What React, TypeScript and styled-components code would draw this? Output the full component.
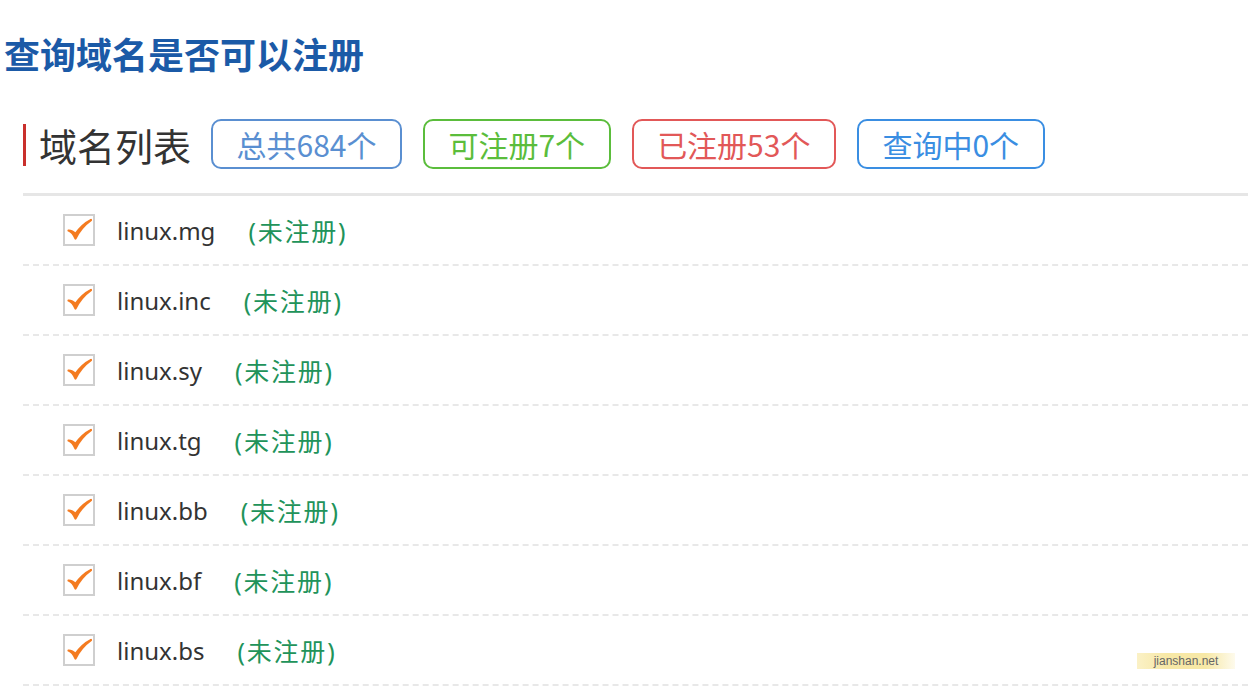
import React from "react";
import styled, { createGlobalStyle } from "styled-components";

const Global = createGlobalStyle`
  html, body { margin: 0; padding: 0; background: #fff; }
  body { font-family: "Noto Sans", "Noto Sans CJK SC", sans-serif; overflow: hidden; }
`;

const Page = styled.div`
  position: relative;
  width: 1248px;
  height: 696px;
  padding-top: 32px;
  box-sizing: border-box;
`;

const Title = styled.h1`
  margin: 0 0 0 4px;
  font-family: "Noto Sans CJK SC", sans-serif;
  font-size: 36px;
  line-height: 42px;
  font-weight: 700;
  color: #1b5aa7;
`;

const Section = styled.section`
  margin: 45px 0 0 23px;
`;

const Header = styled.div`
  display: flex;
  align-items: center;
  gap: 21px;
  height: 50px;
  padding-bottom: 24px;
  border-bottom: 3px solid #e6e6e6;
`;

const HeadLabel = styled.div`
  display: flex;
  align-items: center;
  gap: 13px;
  font-family: "Noto Sans CJK SC", sans-serif;
  font-size: 38px;
  color: #333;
  height: 50px;
  margin-right: -1px;
  &::before {
    content: "";
    display: block;
    width: 3px;
    height: 42px;
    background: #c9302c;
    margin-top: 2px;
  }
`;

const Badge = styled.div<{ $color: string }>`
  display: flex;
  align-items: center;
  justify-content: center;
  height: 50px;
  box-sizing: border-box;
  padding: 0 23.5px;
  border: 2px solid ${(p) => p.$color};
  border-radius: 10px;
  color: ${(p) => p.$color};
  font-family: "Noto Sans CJK SC", sans-serif;
  font-size: 30px;
`;

const List = styled.ul`
  list-style: none;
  margin: 0;
  padding: 0;
`;

const Row = styled.li`
  display: flex;
  align-items: center;
  height: 68px;
  border-bottom: 2px dashed #e8e8e8;
  padding-left: 40px;
`;

const Check = styled.span`
  display: inline-flex;
  align-items: center;
  justify-content: center;
  width: 32px;
  height: 32px;
  box-sizing: border-box;
  border: 2px solid #cfcfcf;
  background: #fff;
  margin-right: 22px;
`;

const Domain = styled.span`
  font-family: "Noto Sans", sans-serif;
  font-size: 24px;
  color: #333;
  margin-right: 33px;
`;

const Status = styled.span`
  font-family: "Noto Sans", "Noto Sans CJK SC", sans-serif;
  font-size: 25px;
  letter-spacing: 1.8px;
  color: #21935a;
`;

const Watermark = styled.div`
  position: absolute;
  left: 1137px;
  top: 653px;
  width: 98px;
  height: 16px;
  display: flex;
  align-items: center;
  justify-content: center;
  font-family: "Liberation Sans", sans-serif;
  font-size: 12px;
  color: #666;
  background: linear-gradient(90deg, rgba(248,232,160,0.6), #f7e8a6 30%, #f7e8a6 70%, rgba(248,232,160,0.2));
`;

const CheckMark = () => (
  <svg width="26" height="24" viewBox="0 0 26 24">
    <path
      d="M2.5 12.5 C5 13.5 7.5 16 9.5 20.5 C13 13 18 7 25 2 C18 5.5 13 11 9.5 16 C7.5 13.5 5 12.5 2.5 12.5 Z"
      fill="#f47b20"
      stroke="#f47b20"
      strokeWidth="2.2"
      strokeLinejoin="round"
    />
  </svg>
);

const domains = ["linux.mg", "linux.inc", "linux.sy", "linux.tg", "linux.bb", "linux.bf", "linux.bs"];

export default function App() {
  return (
    <>
      <Global />
      <Page>
        <Title>查询域名是否可以注册</Title>
        <Section>
          <Header>
            <HeadLabel>域名列表</HeadLabel>
            <Badge $color="#5a8fd1">总共684个</Badge>
            <Badge $color="#5bbd3c">可注册7个</Badge>
            <Badge $color="#e25858">已注册53个</Badge>
            <Badge $color="#3a8ee2">查询中0个</Badge>
          </Header>
          <List>
            {domains.map((d) => (
              <Row key={d}>
                <Check>
                  <CheckMark />
                </Check>
                <Domain>{d}</Domain>
                <Status>(未注册)</Status>
              </Row>
            ))}
          </List>
        </Section>
        <Watermark>jianshan.net</Watermark>
      </Page>
    </>
  );
}
